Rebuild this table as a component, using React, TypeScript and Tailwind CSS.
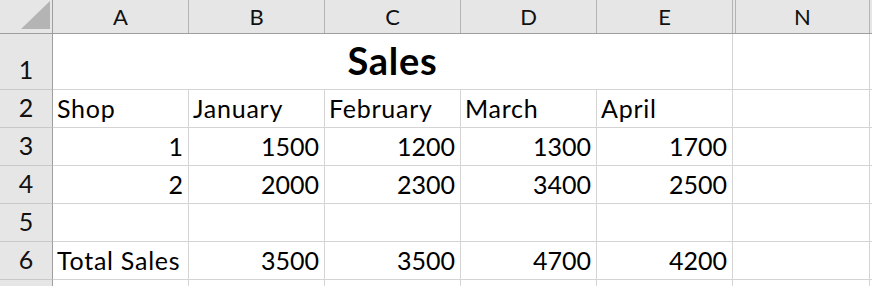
import React from "react";

type Align = "left" | "right";

interface Cell {
  text: string;
  align: Align;
}

const columns = ["A", "B", "C", "D", "E"];

const blank = () => columns.map(() => ({ text: "", align: "left" as Align }));
const numbers = (values: string[]) => values.map((t) => ({ text: t, align: "right" as Align }));

const rows: { n: number; label: string; cells: Cell[] }[] = [
  {
    n: 2,
    label: "2",
    cells: ["Shop", "January", "February", "March", "April"].map((t) => ({ text: t, align: "left" as Align })),
  },
  { n: 3, label: "3", cells: numbers(["1", "1500", "1200", "1300", "1700"]) },
  { n: 4, label: "4", cells: numbers(["2", "2000", "2300", "3400", "2500"]) },
  { n: 5, label: "5", cells: blank() },
  {
    n: 6,
    label: "6",
    cells: [{ text: "Total Sales", align: "left" }, ...numbers(["3500", "3500", "4700", "4200"])],
  },
  // only the top edge of row 7 is in view, so its number stays below the fold
  { n: 7, label: "", cells: blank() },
];

const RowHeader = ({ label }: { label: string }) => (
  <div className="flex w-[53px] shrink-0 items-end justify-center border-r border-b border-r-[#9e9e9e] border-b-[#c8c8c8] bg-[#e6e6e6] pb-[7px] text-[25px] leading-none text-[#111]">
    {label}
  </div>
);

// empty cells to the right of the data: hidden-column gap, N and the next column
const TrailingCells = () => (
  <>
    <div className="w-[3px] shrink-0 border-b border-[#d4d4d4]" />
    <div className="w-[134px] shrink-0 border-r border-b border-[#d4d4d4]" />
    <div className="w-[136px] shrink-0 border-r border-b border-[#d4d4d4]" />
  </>
);

export default function App() {
  return (
    <div className="h-[286px] w-[872px] overflow-hidden bg-white font-['Lato',sans-serif] text-black">
      {/* column letters */}
      <div className="flex h-[34px] border-b border-[#9e9e9e] bg-[#e6e6e6]">
        <div className="w-[53px] shrink-0 border-r border-[#9e9e9e]">
          <svg width="52" height="33" viewBox="0 0 52 33">
            <polygon points="50,1 50,29 21,29" fill="#b4b4b4" />
          </svg>
        </div>
        {columns.map((c) => (
          <div
            key={c}
            className="flex w-[136px] shrink-0 items-center justify-center border-r border-[#b4b4b4] text-[22px] leading-none text-[#111]"
          >
            {c}
          </div>
        ))}
        <div className="w-[3px] shrink-0 border-r border-[#b4b4b4]" />
        <div className="flex w-[134px] shrink-0 items-center justify-center border-r border-[#b4b4b4] text-[22px] leading-none text-[#111]">
          N
        </div>
        <div className="w-[136px] shrink-0" />
      </div>

      {/* row 1: merged title across A:E */}
      <div className="flex h-[56px]">
        <RowHeader label="1" />
        <div className="flex w-[680px] shrink-0 items-end justify-center border-r border-b border-[#d4d4d4] pb-[10px] text-[38px] font-bold leading-none tracking-[0.02em]">
          Sales
        </div>
        <TrailingCells />
      </div>

      {rows.map((row) => (
        <div key={row.n} className="flex h-[38px]">
          <RowHeader label={row.label} />
          {row.cells.map((cell, i) => (
            <div
              key={i}
              className={`flex w-[136px] shrink-0 items-end border-r border-b border-[#d4d4d4] pb-[6px] text-[25px] leading-none ${
                cell.align === "right"
                  ? "justify-end pr-[5px]"
                  : "justify-start pl-[4px] tracking-[0.03em]"
              }`}
            >
              {cell.text}
            </div>
          ))}
          <TrailingCells />
        </div>
      ))}
    </div>
  );
}
